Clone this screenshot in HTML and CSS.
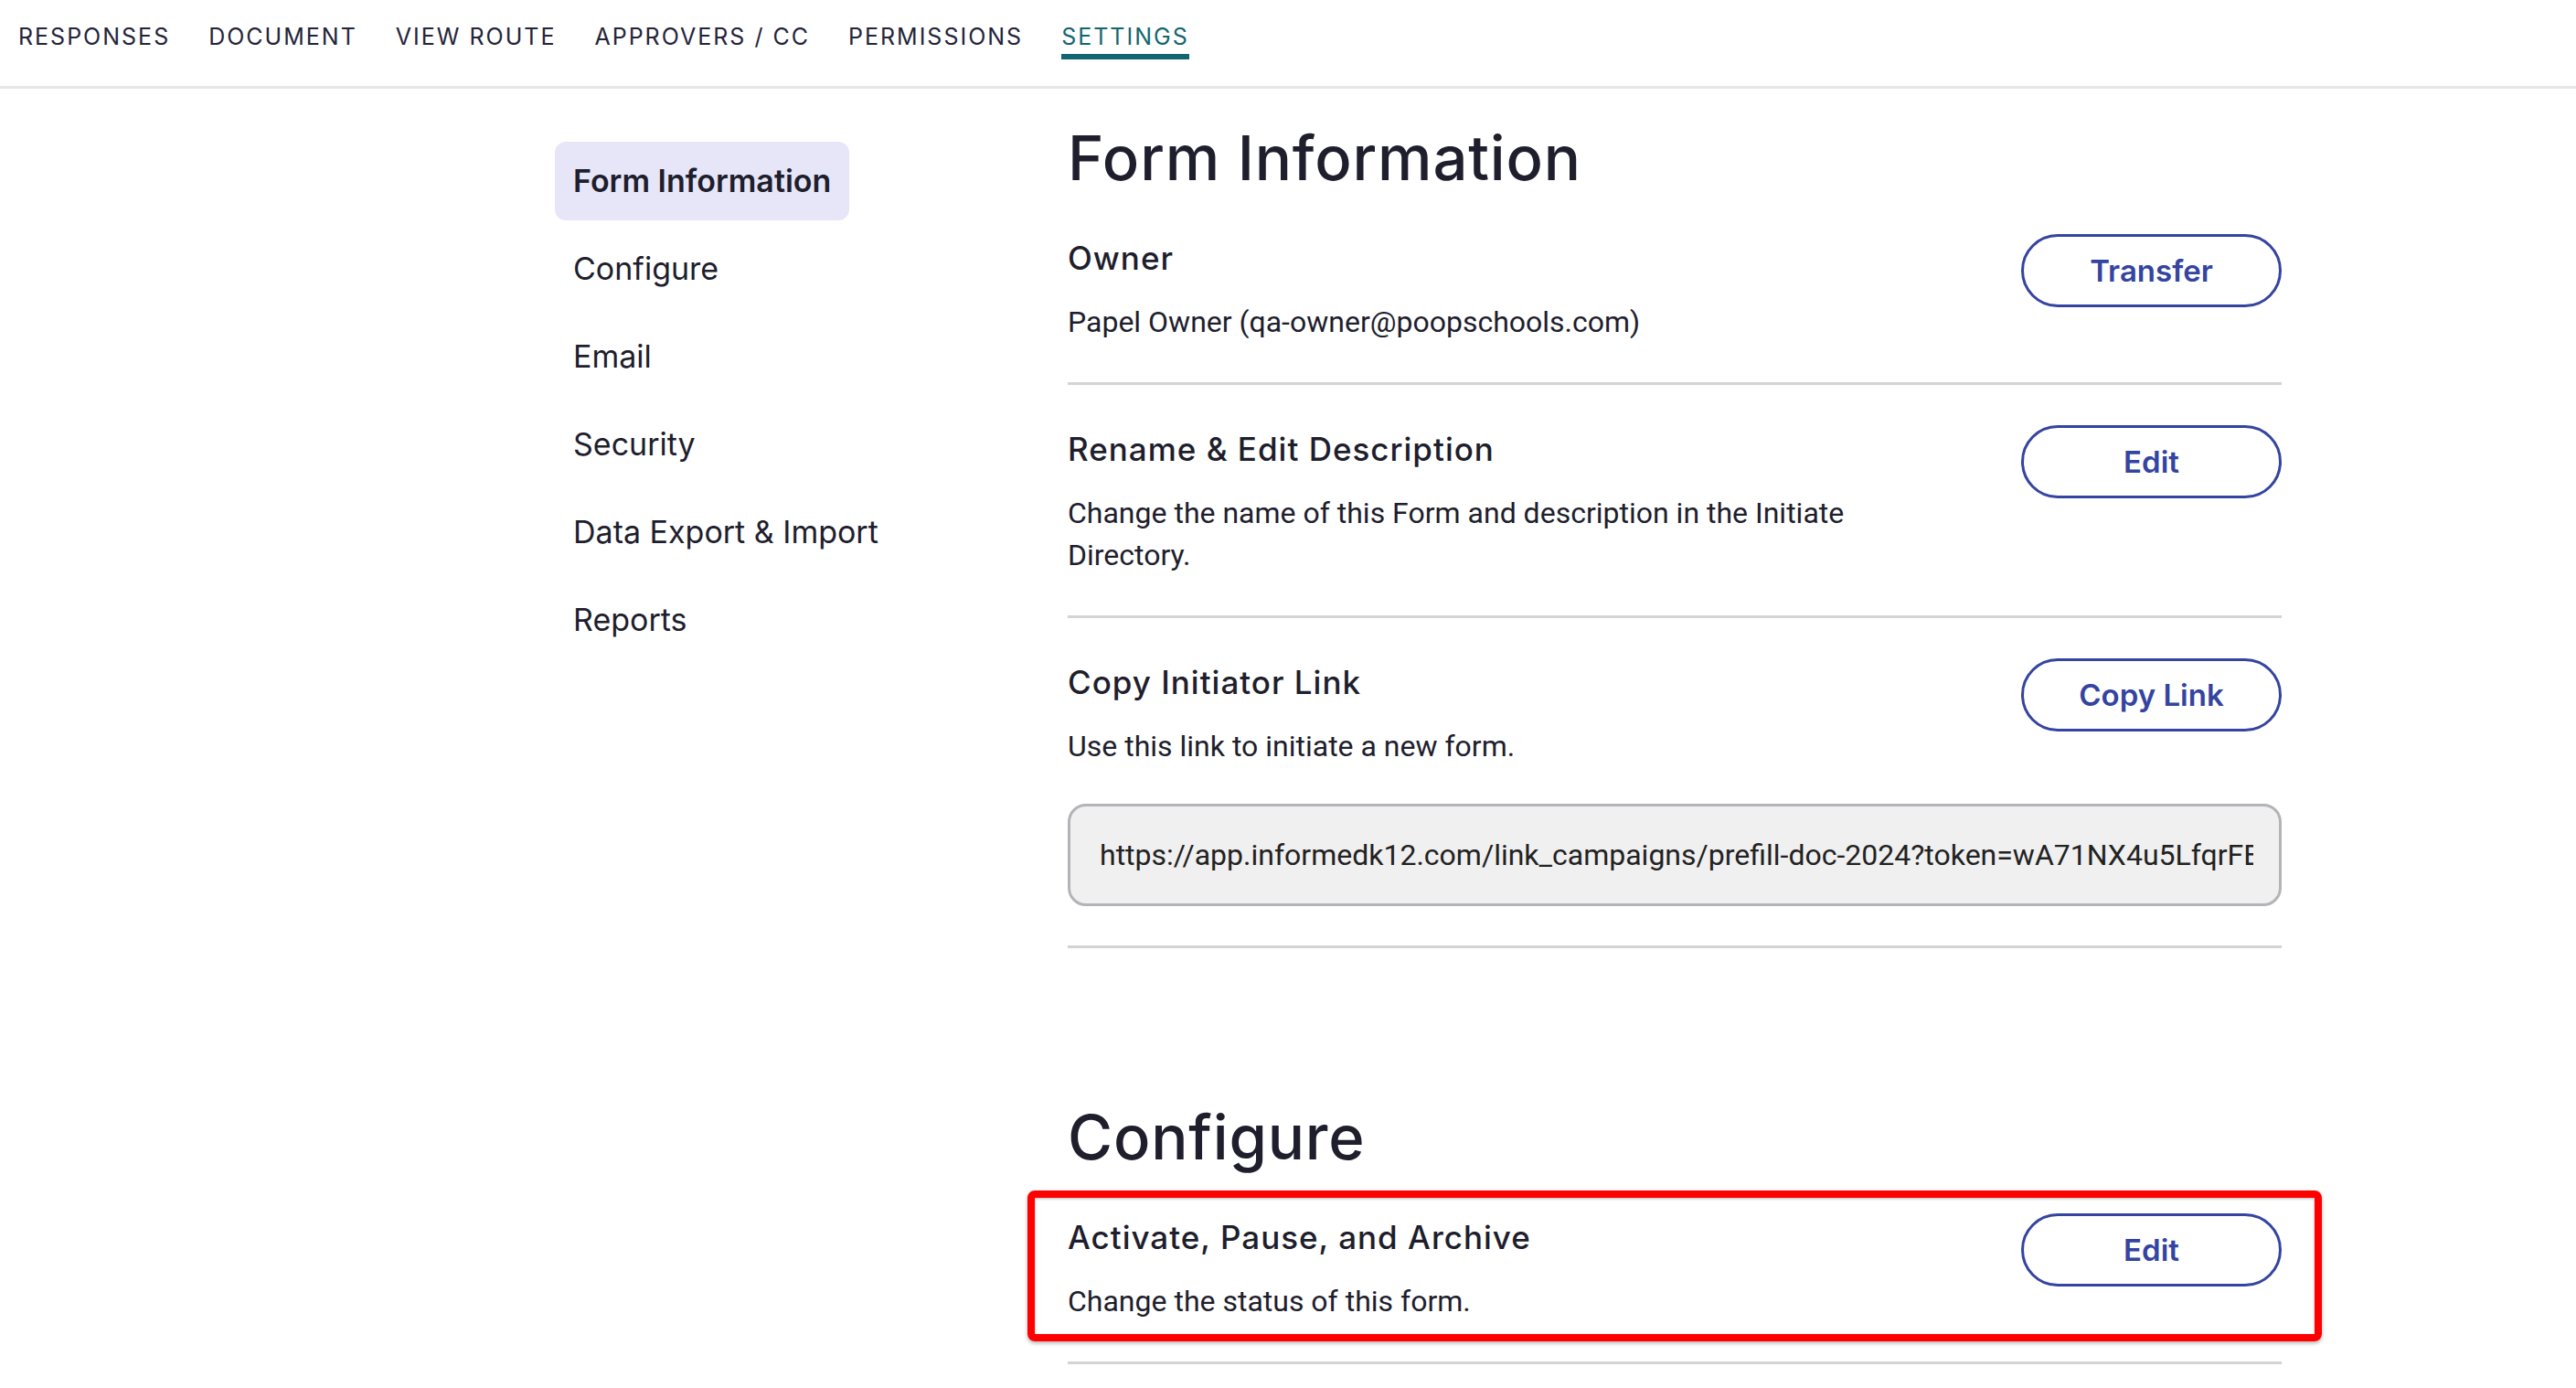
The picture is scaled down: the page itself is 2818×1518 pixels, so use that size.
FILE: index.html
```html
<!DOCTYPE html>
<html lang="en">
<head>
    <meta charset="UTF-8">
    <meta name="viewport" content="width=device-width, initial-scale=1.0">
    <title>Form Settings</title>
    <link rel="stylesheet" href="styles.css">
</head>
<body>

<nav class="tabs">
    <a class="tab">RESPONSES</a>
    <a class="tab">DOCUMENT</a>
    <a class="tab">VIEW ROUTE</a>
    <a class="tab">APPROVERS / CC</a>
    <a class="tab">PERMISSIONS</a>
    <a class="tab active">SETTINGS</a>
</nav>

<div class="layout">
    <aside class="side-nav">
        <a class="side-link active">Form Information</a>
        <a class="side-link">Configure</a>
        <a class="side-link">Email</a>
        <a class="side-link">Security</a>
        <a class="side-link">Data Export &amp; Import</a>
        <a class="side-link">Reports</a>
    </aside>

    <main class="content">
        <h1 class="section-title">Form Information</h1>

        <div class="setting-row">
            <div class="row-top">
                <div class="setting-text">
                    <h3 class="setting-title">Owner</h3>
                    <p class="setting-desc">Papel Owner (qa-owner@poopschools.com)</p>
                </div>
                <button class="outline-btn">Transfer</button>
            </div>
        </div>

        <div class="setting-row">
            <div class="row-top">
                <div class="setting-text">
                    <h3 class="setting-title">Rename &amp; Edit Description</h3>
                    <p class="setting-desc">Change the name of this Form and description in the Initiate Directory.</p>
                </div>
                <button class="outline-btn">Edit</button>
            </div>
        </div>

        <div class="setting-row">
            <div class="row-top">
                <div class="setting-text">
                    <h3 class="setting-title">Copy Initiator Link</h3>
                    <p class="setting-desc">Use this link to initiate a new form.</p>
                </div>
                <button class="outline-btn">Copy Link</button>
            </div>
            <div class="link-field">
                <div class="link-text">https://app.informedk12.com/link_campaigns/prefill-doc-2024?token=wA71NX4u5LfqrFEkq82</div>
            </div>
        </div>

        <h1 class="section-title spaced">Configure</h1>

        <div class="setting-row">
            <div class="row-top">
                <div class="setting-text">
                    <h3 class="setting-title">Activate, Pause, and Archive</h3>
                    <p class="setting-desc">Change the status of this form.</p>
                </div>
                <button class="outline-btn">Edit</button>
            </div>
            <div class="highlight-box"></div>
        </div>
    </main>
</div>

</body>
</html>
```

FILE: styles.css
```css
body {
    margin: 0;
    font-family: Inter, "Noto Sans", sans-serif;
    background-color: #ffffff;
    color: #1e1e2d;
}

/* top tabs */
.tabs {
    display: flex;
    gap: 42px;
    height: 94px;
    padding-left: 20px;
    border-bottom: 3px solid #e6e6e6;
}

.tab {
    padding-top: 24px;
    padding-bottom: 3px;
    line-height: 32px;
    height: 32px;
    font-size: 25px;
    letter-spacing: 2px;
    color: #24243a;
    border-bottom: 6px solid transparent;
    cursor: pointer;
}

.tab.active {
    color: #13666f;
    border-bottom-color: #13666f;
}

/* page body */
.layout {
    display: flex;
    padding-left: 607px;
}

.side-nav {
    width: 561px;
    flex-shrink: 0;
    display: flex;
    flex-direction: column;
    align-items: flex-start;
    gap: 10px;
    padding-top: 58px;
}

.side-link {
    height: 86px;
    line-height: 86px;
    padding: 0 20px;
    font-size: 34px;
    border-radius: 12px;
    color: #1e1e2d;
    cursor: pointer;
}

.side-link.active {
    background: #e6e6f8;
    font-weight: 600;
}

.content {
    width: 1328px;
    padding-top: 37px;
}

.section-title {
    margin: 0;
    font-size: 67px;
    line-height: 78px;
    font-weight: 500;
    letter-spacing: 0.8px;
}

.section-title.spaced {
    margin-top: 168px;
}

.setting-row {
    position: relative;
    padding: 46px 0 43px;
    border-bottom: 3px solid #d4d4d4;
}

.row-top {
    display: flex;
    justify-content: space-between;
    align-items: flex-start;
}

.setting-text {
    max-width: 920px;
}

.setting-title {
    margin: 0;
    font-size: 35px;
    line-height: 48px;
    font-weight: 500;
    letter-spacing: 1px;
}

.setting-desc {
    margin: 23px 0 0;
    font-family: Roboto, "Liberation Sans", sans-serif;
    font-size: 32px;
    line-height: 46px;
}

.outline-btn {
    margin-top: -2px;
    width: 285px;
    height: 80px;
    border: 3px solid #3444a0;
    border-radius: 40px;
    background: #ffffff;
    color: #3444a0;
    font-family: Inter, "Noto Sans", sans-serif;
    font-size: 33px;
    font-weight: 600;
    cursor: pointer;
}

.link-field {
    margin-top: 40px;
    height: 106px;
    padding: 0 28px 0 32px;
    background: #f0f0f0;
    border: 3px solid #b4b4b8;
    border-radius: 20px;
}

.link-text {
    line-height: 106px;
    font-family: Roboto, "Liberation Sans", sans-serif;
    font-size: 32px;
    color: #222222;
    white-space: nowrap;
    overflow: hidden;
}

/* red annotation frame */
.highlight-box {
    position: absolute;
    top: 19px;
    bottom: 22px;
    left: -44px;
    right: -44px;
    border: 8px solid #ff0000;
    border-radius: 8px;
    box-shadow: 0 2px 4px rgba(0, 0, 0, 0.3), inset 0 1px 3px rgba(0, 0, 0, 0.3);
    pointer-events: none;
}
```
